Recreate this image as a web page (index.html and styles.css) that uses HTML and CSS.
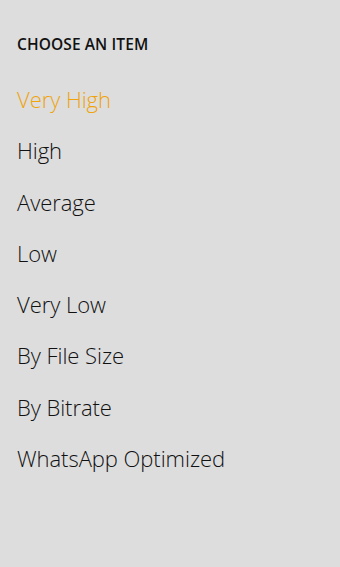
FILE: index.html
```html
<!DOCTYPE html>
<html lang="en">
<head>
<meta charset="utf-8">
<title>Choose an item</title>
<link rel="stylesheet" href="styles.css">
</head>
<body>
<main class="picker">
  <h1 class="picker-title">CHOOSE AN ITEM</h1>
  <ul class="picker-list">
    <li class="picker-item is-selected">Very High</li>
    <li class="picker-item">High</li>
    <li class="picker-item">Average</li>
    <li class="picker-item">Low</li>
    <li class="picker-item">Very Low</li>
    <li class="picker-item">By File Size</li>
    <li class="picker-item">By Bitrate</li>
    <li class="picker-item">WhatsApp Optimized</li>
  </ul>
</main>
</body>
</html>
```
FILE: styles.css
```css
html, body {
  margin: 0;
  padding: 0;
  background: #dddddd;
  height: 100%;
}
.picker {
  padding: 34px 0 0 17px;
  font-family: "Open Sans", "Noto Sans", sans-serif;
  color: #111111;
}
.picker-title {
  margin: 0;
  font-size: 15.5px;
  font-weight: 600;
  line-height: 20px;
  letter-spacing: 0.1px;
}
.picker-list {
  list-style: none;
  margin: 20px 0 0 0;
  padding: 0;
}
.picker-item {
  font-size: 22px;
  font-weight: 300;
  line-height: 51.3px;
  height: 51.3px;
  letter-spacing: -0.05px;
}
.picker-item.is-selected {
  color: #f0a30a;
}
```
